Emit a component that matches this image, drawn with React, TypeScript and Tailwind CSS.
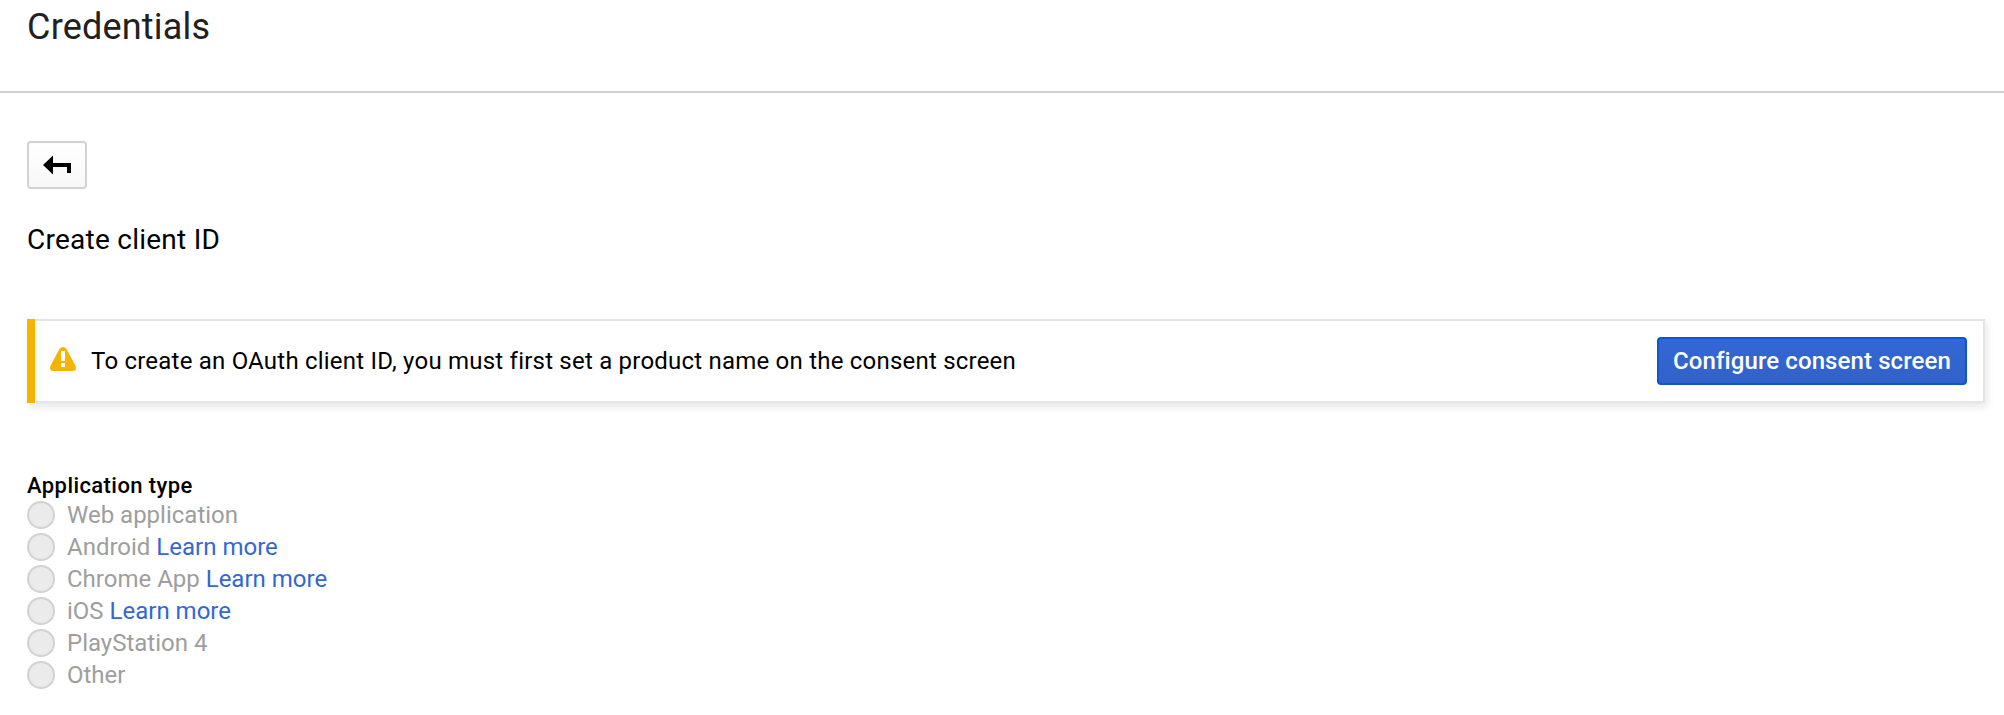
import React from "react";

type AppType = { label: string; learnMore?: boolean };

const APP_TYPES: AppType[] = [
  { label: "Web application" },
  { label: "Android", learnMore: true },
  { label: "Chrome App", learnMore: true },
  { label: "iOS", learnMore: true },
  { label: "PlayStation 4" },
  { label: "Other" },
];

function BackIcon() {
  return (
    <svg width="28" height="20" viewBox="0 0 28 20" aria-hidden="true">
      <path d="M0 10 L10 .5 V8 H28 V18 H24 V12 H10 V19.5 Z" fill="#000" />
    </svg>
  );
}

function WarningIcon() {
  return (
    <svg className="-mt-1" width="26" height="24" viewBox="0 0 26 24" aria-hidden="true">
      <path
        d="M9.6 1.8 Q11 0 13 0 Q15 0 16.4 1.8 L25.3 18.4 Q26.6 21.2 25.4 22.9 Q24.5 24 22.8 24 H3.2 Q1.5 24 .6 22.9 Q-.6 21.2 .7 18.4 Z"
        fill="#f4b400"
      />
      <path d="M11 4 H15 V14 H11 Z M11 16 H15 V20 H11 Z" fill="#fff" />
    </svg>
  );
}

export default function App() {
  return (
    <div className="h-[715px] w-full bg-white font-['Roboto',sans-serif] text-black">
      <header className="h-[93px] border-b-2 border-[#d2d2d2] pl-[27px] pt-[6px]">
        <h1 className="text-[36px] leading-[42px] tracking-[0.2px] text-[#212121]">Credentials</h1>
      </header>
      <main className="flex flex-col items-start pl-[27px] pr-[19px] pt-12">
        <button
          aria-label="Back"
          className="flex h-12 w-[60px] items-center justify-center rounded-[4px] border-2 border-[#d2d2d2] bg-linear-to-b from-white to-[#f8f8f8]"
        >
          <BackIcon />
        </button>
        <h2 className="mt-[34px] text-[28px] leading-[33px] tracking-[0.25px]">Create client ID</h2>
        <section className="mt-[63px] flex h-[84px] w-full shadow-[2px_4px_8px_rgba(0,0,0,0.1)]">
          <div className="w-2 bg-[#f4b400]" />
          <div className="flex flex-1 items-center border-y-2 border-r-2 border-[#e5e5e5] pl-[15px] pr-4">
            <WarningIcon />
            <p className="ml-[15px] flex-1 text-[24px] leading-7 tracking-[0.215px]">
              To create an OAuth client ID, you must first set a product name on the consent screen
            </p>
            <button className="h-12 w-[310px] rounded-[4px] border-2 border-[#1155cc] bg-linear-to-b from-[#3367d6] to-[#3262c8] text-[24px] font-medium leading-7 tracking-[0.1px] text-white">
              Configure consent screen
            </button>
          </div>
        </section>
        <h3 className="mt-[70px] text-[22px] font-medium leading-[25px] tracking-[0.42px]">Application type</h3>
        <ul className="mt-[3px] flex flex-col gap-1">
          {APP_TYPES.map((t) => (
            <li key={t.label} className="flex h-7 items-center text-[24px] leading-7 text-[#9e9e9e]">
              <span className="mr-3 size-7 rounded-full border-2 border-[#d2d2d2] bg-[#ebebeb]" />
              <span>
                {t.label}
                {t.learnMore && <a className="text-[#3367d6]"> Learn more</a>}
              </span>
            </li>
          ))}
        </ul>
      </main>
    </div>
  );
}
